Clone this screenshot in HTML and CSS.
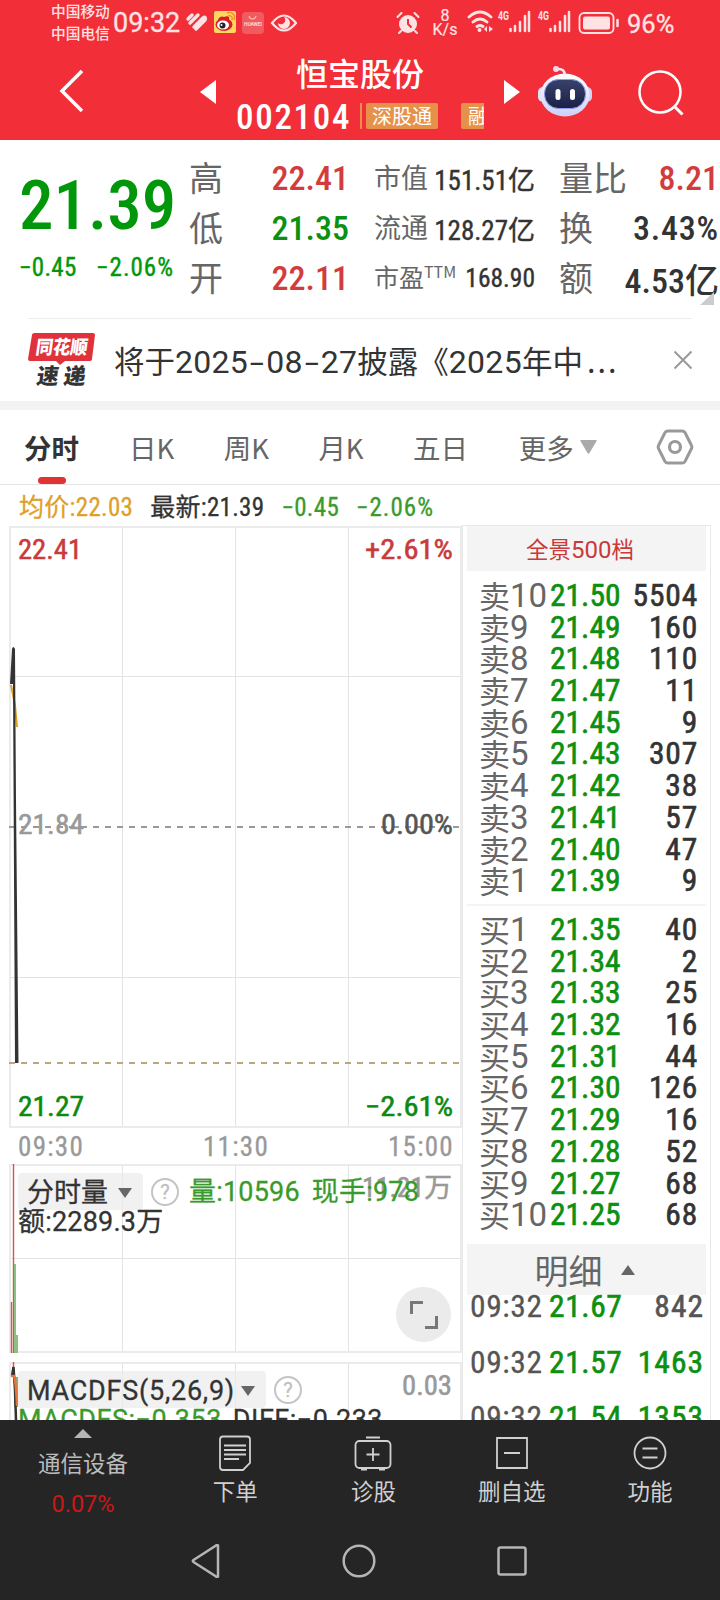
FILE: index.html
```html
<!DOCTYPE html>
<html lang="zh-CN">
<head>
    <meta charset="UTF-8">
    <meta name="viewport" content="width=device-width, initial-scale=1.0">
    <title>恒宝股份 002104</title>
    <link rel="stylesheet" href="styles.css">
</head>

<body>
    <header class="header">
        <div class="status">
            <div class="carriers"><span>中国移动</span><span>中国电信</span></div>
            <span class="clock">09:32</span>
            <svg class="status-icons" width="112" height="30" viewBox="0 0 112 30">
                <g fill="none" stroke="#ffe3e4" stroke-width="3.4" stroke-linecap="round">
                    <path d="M3 11l4-4M5 15l8-8M9 19l9-9c2-2 3 0 2 2l-9 9"/>
                </g>
                <rect x="29" y="3" width="22" height="22" rx="2" fill="#ffd75e"/>
                <ellipse cx="39" cy="16.500" rx="8.500" ry="6.500" fill="#d5202c"/>
                <path d="M33 12c1-4 5-4 6-3 4-2 6 0 5 3z" fill="#d5202c"/>
                <ellipse cx="38" cy="17" rx="6" ry="4.500" fill="#fff"/>
                <circle cx="37.500" cy="17.500" r="3" fill="#222"/>
                <circle cx="36.500" cy="17" r="1" fill="#fff"/>
                <path d="M43 8c3-1 5 1 4 4M42 5c5-2 9 2 7 7" fill="none" stroke="#f0932b" stroke-width="1.500"/>
                <rect x="57" y="4" width="22" height="22" rx="4" fill="#f05b60"/>
                <path d="M64 8c1 4 6 4 7 0" fill="none" stroke="#ffb5b7" stroke-width="1.200"/>
                <text x="59" y="18" class="huawei" textLength="18">HUAWEI</text>
                <path d="M87 15q12-15 24 0q-12 15-24 0z" fill="none" stroke="#ffe3e4" stroke-width="2.200"/>
                <path d="M99 9a6 6 0 1 1-6 6a4 4 0 0 0 6-6z" fill="#ffe3e4"/>
            </svg>
            <svg class="alarm" width="24" height="24" viewBox="0 0 24 24">
                <circle cx="12" cy="13" r="9" fill="#ffe3e4"/>
                <path d="M12 8v5l3.500 3.500" fill="none" stroke="#f22f39" stroke-width="2"/>
                <path d="M1.500 6l4-4M22.500 6l-4-4M5 20l-2 2M19 20l2 2" stroke="#ffe3e4" stroke-width="2" stroke-linecap="round"/>
            </svg>
            <div class="speed"><span>8</span><span>K/s</span></div>
            <svg class="signals" width="156" height="26" viewBox="0 0 156 26">
                <g fill="none" stroke="#ffe3e4" stroke-width="2.800" stroke-linecap="round">
                    <path d="M2 8q11-10 22 0M6 13q7-6 14 0M10 17.500q3-2 6 0"/>
                </g>
                <circle cx="12.500" cy="21" r="2" fill="#ffe3e4"/>
                <path d="M17 20l3-3v6zM26 20l-4-3v6z" fill="#ffe3e4"/>
                <text x="31" y="11" class="net" textLength="11" lengthAdjust="spacingAndGlyphs">4G</text>
                <path d="M43.500 22v-2M48 22v-5M53 22v-9M58 22V7M62 22V3" stroke="#ffe3e4" stroke-width="2.500" stroke-linecap="round"/>
                <text x="71" y="11" class="net" textLength="11" lengthAdjust="spacingAndGlyphs">4G</text>
                <path d="M83.500 22v-2M88 22v-5M93 22v-9M98 22V7M102 22V3" stroke="#ffe3e4" stroke-width="2.500" stroke-linecap="round"/>
                <rect x="112.500" y="4" width="34" height="20" rx="4.500" fill="none" stroke="#ffe3e4" stroke-width="1.800"/>
                <rect x="116" y="7.500" width="27" height="13" rx="2" fill="#ffe3e4"/>
                <path d="M150.500 11v6" stroke="#ffe3e4" stroke-width="2.500" stroke-linecap="round"/>
            </svg>
            <span class="battery">96%</span>
        </div>
        <div class="titlebar">
            <svg class="back" width="30" height="46" viewBox="0 0 30 46">
                <path d="M25 3L5 23L25 43" fill="none" stroke="#fff" stroke-width="3.500"/>
            </svg>
            <svg class="prev" width="16" height="24" viewBox="0 0 16 24"><path d="M16 0v24L0 12z" fill="#fff"/></svg>
            <div class="stock">
                <div class="stock-name">恒宝股份</div>
                <div class="stock-code">
                    <span class="num code">002104</span>
                    <i class="sliver"></i>
                    <span class="tag">深股通</span>
                    <span class="tag tag-cut">融</span>
                </div>
            </div>
            <svg class="next" width="16" height="24" viewBox="0 0 16 24"><path d="M0 0v24L16 12z" fill="#fff"/></svg>
            <svg class="robot" width="56" height="52" viewBox="0 0 56 52">
                <defs>
                    <linearGradient id="shell" x1="0" y1="0" x2="0" y2="1">
                        <stop offset="0" stop-color="#fff"/>
                        <stop offset="1" stop-color="#cdd0f8"/>
                    </linearGradient>
                    <linearGradient id="screen" x1="0" y1="0" x2="0" y2="1">
                        <stop offset="0" stop-color="#39426b"/>
                        <stop offset="1" stop-color="#1a2047"/>
                    </linearGradient>
                </defs>
                <path d="M20 4q8-1 8 7" fill="none" stroke="#f6e9fb" stroke-width="2.500"/>
                <circle cx="19" cy="4" r="3" fill="#f6d9ee"/>
                <rect x="1" y="22" width="10" height="15" rx="5" fill="#dfe0fb"/>
                <rect x="45" y="22" width="10" height="15" rx="5" fill="#cfd3fa"/>
                <ellipse cx="28" cy="30" rx="24.500" ry="21.500" fill="url(#shell)"/>
                <rect x="7.500" y="14.500" width="41" height="29" rx="14" fill="url(#screen)" stroke="#8f9df0" stroke-width="1"/>
                <path d="M21 26.500v6M35.500 26.500v6" stroke="#fff" stroke-width="5" stroke-linecap="round"/>
            </svg>
            <svg class="search" width="46" height="46" viewBox="0 0 46 46">
                <circle cx="22" cy="22" r="20.500" fill="none" stroke="#fff" stroke-width="2.500"/>
                <path d="M36 36l8.500 8.500" stroke="#fff" stroke-width="3"/>
            </svg>
        </div>
    </header>

    <section class="quote">
        <div class="price-box">
            <div class="num price">21.39</div>
            <div class="num change"><span>−0.45</span><span class="percent">−2.06%</span></div>
        </div>
        <div class="facts big">
            <div><label>高</label><b class="num red">22.41</b></div>
            <div><label>低</label><b class="num green">21.35</b></div>
            <div><label>开</label><b class="num red">22.11</b></div>
        </div>
        <div class="facts small">
            <div><label>市值</label><b class="num">151.51亿</b></div>
            <div><label>流通</label><b class="num">128.27亿</b></div>
            <div><label class="pe">市盈<sup>TTM</sup></label><b class="num pe-value">168.90</b></div>
        </div>
        <div class="facts big last">
            <div><label>量比</label><b class="num red">8.21</b></div>
            <div><label>换</label><b class="num turnover">3.43%</b></div>
            <div><label>额</label><b class="num">4.53亿</b></div>
        </div>
        <i class="corner"></i>
    </section>

    <section class="news">
        <svg class="news-logo" width="68" height="56" viewBox="0 0 68 56">
            <path d="M7 1H65q2 0 2 2l-3 24q0 2-2 2H37l-5 4l-4-4H2q-2 0-2-2L4 3q0-2 3-2z" fill="#e0323a"/>
            <g transform="skewX(-8)">
                <text x="10" y="22" class="logo-top" textLength="52" lengthAdjust="spacingAndGlyphs">同花顺</text>
                <text x="15" y="52" class="logo-bottom" textLength="49">速递</text>
            </g>
        </svg>
        <div class="news-text">将于<span>2025<i>-</i>08<i>-</i>27</span>披露《<span>2025</span>年中<em>...</em></div>
        <svg class="close" width="20" height="20" viewBox="0 0 20 20"><path d="M1.500 1.500l17 17M18.500 1.500l-17 17" stroke="#999" stroke-width="2"/></svg>
    </section>

    <nav class="tabs">
        <a class="tab active">分时</a>
        <a class="tab">日K</a>
        <a class="tab">周K</a>
        <a class="tab">月K</a>
        <a class="tab">五日</a>
        <a class="tab more">更多<svg width="17" height="14" viewBox="0 0 17 14"><path d="M1 0h15q1 0 .6 1L9.500 13q-1 1.500-2 0L.4 1Q0 0 1 0z" fill="#aaa"/></svg></a>
        <svg class="gear" width="38" height="36" viewBox="0 0 38 36">
            <path d="M12 2h14q2 0 3 1.500l6.500 13q.8 1.500 0 3L29 32.500q-1 1.500-3 1.500H12q-2 0-3-1.500l-6.500-13q-.8-1.500 0-3L9 3.500Q10 2 12 2z" fill="none" stroke="#999" stroke-width="3"/>
            <circle cx="19" cy="18" r="5.500" fill="none" stroke="#999" stroke-width="3.200"/>
        </svg>
    </nav>

    <div class="legend num">
        <span class="avg">均价:22.03</span>
        <span>最新:21.39</span>
        <span class="dgreen">−0.45</span>
        <span class="dgreen percent">−2.06%</span>
    </div>

    <main class="main">
        <div class="charts">
            <svg class="panel" width="462" height="603" viewBox="0 525 462 603">
                <g fill="none" stroke="#e3e3e3">
                    <path d="M122.500 527V1127M235.500 527V1127M348.500 527V1127M10 676.500H461M10 977.500H461"/>
                    <path d="M10 527H461V1127H10z" stroke="#ebebeb" stroke-width="2"/>
                </g>
                <path d="M9 827H462" stroke="#999" stroke-width="2" stroke-dasharray="6 6" />
                <path d="M9 1063H462" stroke="#bda67c" stroke-width="2" stroke-dasharray="6 6"/>
                <path d="M11 685L15 705L17 727" fill="none" stroke="#e0a020" stroke-width="2"/>
                <path d="M10 684L12 649q1-4 3 0L16 800L18.500 1063H15L13 684z" fill="#333"/>
                <g class="axis">
                    <text x="18" y="559" class="f-red" textLength="64" lengthAdjust="spacingAndGlyphs">22.41</text>
                    <text x="365" y="559" class="f-red" textLength="88" lengthAdjust="spacingAndGlyphs">+2.61%</text>
                    <text x="18" y="834" class="f-gray" textLength="66" lengthAdjust="spacingAndGlyphs">21.84</text>
                    <text x="381" y="834" class="f-dark" textLength="72" lengthAdjust="spacingAndGlyphs">0.00%</text>
                    <text x="18" y="1116" class="f-green" textLength="66" lengthAdjust="spacingAndGlyphs">21.27</text>
                    <text x="365" y="1116" class="f-green" textLength="88" lengthAdjust="spacingAndGlyphs">−2.61%</text>
                </g>
            </svg>
            <div class="times num"><span>09:30</span><span>11:30</span><span>15:00</span></div>
            <div class="sub volume">
                <svg class="panel" width="462" height="189" viewBox="0 1164 462 189">
                    <g fill="none" stroke="#e3e3e3">
                        <path d="M122.500 1165V1352M235.500 1165V1352M348.500 1165V1352M10 1258.500H461"/>
                        <path d="M10 1165H461V1352H10z" stroke="#ebebeb" stroke-width="2"/>
                    </g>
                    <path d="M11.500 1302V1353M13.500 1164V1353" stroke="#d9534f" stroke-width="1.400"/>
                    <path d="M14 1264h2v71h2v18h-4z" fill="#8cc081"/>
                    <text x="362" y="1197" class="vmax" textLength="90" lengthAdjust="spacingAndGlyphs">11.21万</text>
                </svg>
                <div class="sub-info">
                    <span class="picker">分时量<i></i></span><span class="help">?</span><span class="dgreen">量:10596</span><span class="dgreen now">现手:978</span>
                    <div class="amount">额:2289.3万</div>
                </div>
                <span class="expand"><svg width="30" height="30" viewBox="0 0 30 30"><path d="M2.500 14V2.500H14M27.500 16V27.500H16" fill="none" stroke="#777" stroke-width="3"/></svg></span>
            </div>
            <div class="sub macd">
                <svg class="panel" width="462" height="58" viewBox="0 1362 462 58">
                    <g fill="none" stroke="#e3e3e3">
                        <path d="M122.500 1363V1420M235.500 1363V1420M348.500 1363V1420"/>
                        <path d="M10 1420V1363H461V1420" stroke="#ebebeb" stroke-width="2"/>
                    </g>
                    <path d="M13.500 1362V1376" stroke="#d9534f" stroke-width="1.500"/>
                    <path d="M14 1377h4v30h-4z" fill="#7db56f"/>
                    <path d="M12 1376L13.500 1367L15 1390L16 1420" fill="none" stroke="#333" stroke-width="2.500"/>
                    <path d="M11 1376h3q2 6 3 30" fill="none" stroke="#e5743a" stroke-width="2.500"/>
                    <text x="402" y="1395" class="vmax" textLength="50" lengthAdjust="spacingAndGlyphs">0.03</text>
                </svg>
                <div class="sub-info">
                    <span class="picker wide"><span class="macd-name">MACDFS(5,26,9)</span><i></i></span><span class="help">?</span>
                    <div class="amount macd-values"><span class="dgreen">MACDFS:−0.353</span><span>DIFF:−0.233</span></div>
                </div>
            </div>
        </div>

        <aside class="depth">
            <div class="depth-head">全景<span>500</span>档</div>
            <div class="levels" id="sell"></div>
            <div class="levels buy" id="buy"></div>
            <div class="detail-head">明细<i></i></div>
            <div class="trades num">
                <div><span>09:32</span><b class="green">21.67</b><b class="gray">842</b></div>
                <div><span>09:32</span><b class="green">21.57</b><b class="green">1463</b></div>
                <div><span>09:32</span><b class="green">21.54</b><b class="green">1353</b></div>
            </div>
        </aside>
    </main>

    <footer class="bottom">
        <div class="actions">
            <div class="sector"><i></i><span>通信设备</span><b>0.07%</b></div>
            <div class="action">
                <svg width="34" height="36" viewBox="0 0 34 36" fill="none" stroke="#d0d0d0" stroke-width="1.800"><path d="M5 1.500H29q3 0 3 3V28l-7 7H5q-3 0-3-3V4.500q0-3 3-3zM6 10.500H28M6 15H28M6 19.500H28M6 24H21"/></svg>
                <span>下单</span>
            </div>
            <div class="action">
                <svg width="38" height="36" viewBox="0 0 38 36" fill="none" stroke="#d0d0d0" stroke-width="1.800"><rect x="1.500" y="6" width="35" height="27" rx="4"/><path d="M12 2.500H26M19 13V26M12.500 19.500H25.500M7 34.500H13M25 34.500H31"/></svg>
                <span>诊股</span>
            </div>
            <div class="action">
                <svg width="34" height="36" viewBox="0 0 34 36" fill="none" stroke="#d0d0d0" stroke-width="1.800"><path d="M2 3H32V33H2zM9 18H25"/></svg>
                <span>删自选</span>
            </div>
            <div class="action">
                <svg width="34" height="36" viewBox="0 0 34 36" fill="none" stroke="#d0d0d0" stroke-width="1.800"><circle cx="17" cy="18" r="15.500"/><path d="M9.500 13.500H24.500M9.500 22.500H24.500"/></svg>
                <span>功能</span>
            </div>
        </div>
        <div class="sysnav">
            <svg width="30" height="34" viewBox="0 0 30 34"><path d="M27 1.500v31q-1 1-2 0L2.500 18q-1.500-1 0-2L25 1.500q1-1 2 0z" fill="none" stroke="#b5b5b5" stroke-width="2.500"/></svg>
            <svg width="34" height="34" viewBox="0 0 34 34"><circle cx="17" cy="17" r="15.300" fill="none" stroke="#b5b5b5" stroke-width="2.500"/></svg>
            <svg width="30" height="30" viewBox="0 0 30 30"><rect x="1.500" y="1.500" width="27" height="27" rx="2" fill="none" stroke="#b5b5b5" stroke-width="2.500"/></svg>
        </div>
    </footer>

    <script>
        const sells = [[10, "21.50", 5504], [9, "21.49", 160], [8, "21.48", 110], [7, "21.47", 11], [6, "21.45", 9],
                       [5, "21.43", 307], [4, "21.42", 38], [3, "21.41", 57], [2, "21.40", 47], [1, "21.39", 9]];
        const buys = [[1, "21.35", 40], [2, "21.34", 2], [3, "21.33", 25], [4, "21.32", 16], [5, "21.31", 44],
                      [6, "21.30", 126], [7, "21.29", 16], [8, "21.28", 52], [9, "21.27", 68], [10, "21.25", 68]];

        function renderLevels(id, side, rows) {
            document.getElementById(id).innerHTML = rows.map(([level, price, count]) =>
                `<div class="level"><span class="side">${side}<span>${level}</span></span>` +
                `<b class="num green">${price}</b><b class="num count">${count}</b></div>`
            ).join("");
        }

        renderLevels("sell", "卖", sells);
        renderLevels("buy", "买", buys);
    </script>
</body>
</html>
```
FILE: styles.css
```css
* {
    box-sizing: border-box;
}

body {
    margin: 0;
    width: 720px;
    height: 1600px;
    overflow: hidden;
    background: #fff;
    color: #333;
    font-family: "Noto Sans CJK SC", sans-serif;
}

svg {
    display: block;
    flex: none;
}

b, i, em {
    font-style: normal;
    font-weight: 400;
}

.num {
    font-family: Roboto, "Noto Sans CJK SC", sans-serif;
    font-stretch: 87%;
}

.red { color: #d23c3c; }
.green { color: #0c9010; }
.dgreen { color: #3a9a2c; }
.gray { color: #555; }

/* header */
.header {
    height: 140px;
    background: #f22f39;
    color: #fff;
}

.status {
    display: flex;
    height: 48px;
    padding-left: 51px;
    color: #ffe3e4;
    font-family: Roboto, "Noto Sans CJK SC", sans-serif;
}

.carriers {
    display: flex;
    flex-direction: column;
    width: 62px;
    padding-top: 1px;
    font-size: 14.7px;
    font-weight: 500;
    line-height: 22px;
    white-space: nowrap;
}

.clock {
    width: 72px;
    font-size: 27px;
    line-height: 47px;
    -webkit-text-stroke: 0.3px;
}

.status-icons {
    margin-top: 8px;
}

.huawei {
    font-size: 5px;
    fill: #ffd5d6;
    font-weight: bold;
}

.alarm {
    margin: 11px 0 0 99px;
}

.speed {
    display: flex;
    flex-direction: column;
    align-items: center;
    width: 32px;
    margin-left: 9px;
    padding-top: 9px;
    font-size: 16px;
    line-height: 14px;
    -webkit-text-stroke: 0.2px;
}

.signals {
    margin: 9px 0 0 6px;
}

.net {
    font-size: 13px;
    fill: #ffe3e4;
    font-weight: bold;
}

.battery {
    margin-left: 4px;
    font-size: 25.5px;
    line-height: 49px;
    -webkit-text-stroke: 0.3px;
}

.titlebar {
    display: flex;
    height: 92px;
}

.back { margin: 20px 0 0 57px; }
.prev { margin: 32px 0 0 113px; }
.next { margin: 32px 0 0 20px; }
.robot { margin: 17px 0 0 17px; }
.search { margin: 22px 0 0 45px; }

.stock {
    width: 248px;
    margin-left: 20px;
}

.stock-name {
    height: 50px;
    padding-left: 60px;
    font-size: 32px;
    font-weight: 500;
    line-height: 48px;
    white-space: nowrap;
}

.stock-code {
    display: flex;
    align-items: center;
    height: 36px;
    overflow: hidden;
}

.code {
    flex: none;
    width: 124px;
    padding-top: 3px;
    font-size: 35px;
    font-weight: 500;
    letter-spacing: 1.7px;
    line-height: 36px;
}

.sliver {
    flex: none;
    width: 2px;
    height: 26px;
    background: #e6914a;
}

.tag {
    flex: none;
    width: 72px;
    height: 26px;
    margin-left: 4px;
    border-radius: 2px;
    background: #e6914a;
    font-size: 20px;
    line-height: 25px;
    text-align: center;
}

.tag-cut {
    width: 40px;
    margin-left: 23px;
    padding-left: 7px;
    text-align: left;
}

/* quote */
.quote {
    position: relative;
    display: flex;
    height: 179px;
    padding-top: 13px;
}

.quote::after {
    content: "";
    position: absolute;
    left: 28px;
    right: 28px;
    bottom: 0;
    height: 1px;
    background: #ececec;
}

.price-box {
    width: 189px;
    padding-left: 19px;
    color: #00980a;
}

.price {
    height: 90px;
    font-size: 69px;
    font-weight: 500;
    line-height: 105px;
}

.change {
    display: flex;
    justify-content: space-between;
    width: 155px;
    font-size: 25px;
    letter-spacing: 0.3px;
    line-height: 50px;
    white-space: nowrap;
    -webkit-text-stroke: 0.4px;
}

.percent {
    letter-spacing: 1px;
}

.facts > div {
    display: flex;
    align-items: center;
    justify-content: space-between;
    height: 50px;
    white-space: nowrap;
}

.facts label {
    margin-top: -4px;
    color: #666;
}

.facts b {
    font-weight: 500;
}

.big {
    width: 160px;
    font-size: 34px;
}

.small {
    width: 161px;
    margin-left: 25px;
    font-size: 27px;
}

.small b {
    font-weight: 400;
    -webkit-text-stroke: 0.4px;
}

.small .pe-value {
    font-size: 25.5px;
}

.pe {
    font-size: 25px;
}

.pe sup {
    font-size: 16px;
    line-height: 0;
}

.last {
    margin-left: 24px;
}

.turnover {
    letter-spacing: 0.8px;
}

.corner {
    position: absolute;
    right: 6px;
    bottom: 14px;
    border-left: 14px solid transparent;
    border-bottom: 13px solid #ccc;
}

/* news */
.news {
    display: flex;
    align-items: center;
    height: 91px;
    padding-left: 28px;
    border-bottom: 9px solid #f3f3f3;
}

.news-logo {
    overflow: visible;
}

.logo-top {
    font-size: 19px;
    font-weight: 900;
    fill: #fff;
}

.logo-bottom {
    font-size: 22px;
    font-weight: 900;
    fill: #333;
}

.news-text {
    width: 559px;
    padding: 2px 0 0 18px;
    font-size: 30.5px;
    line-height: 50px;
    white-space: nowrap;
}

.news-text span {
    font-family: Roboto, sans-serif;
    font-size: 32px;
    letter-spacing: 0.3px;
}

.news-text i {
    display: inline-block;
    width: 18px;
    text-align: center;
    transform: scaleX(1.6);
}

.news-text em {
    margin-left: 4px;
    letter-spacing: 2px;
}

.close {
    margin-left: 18px;
}

/* tabs */
.tabs {
    display: flex;
    height: 75px;
    padding-left: 24px;
    border-bottom: 1px solid #e5e5e5;
    color: #666;
    font-size: 27.5px;
    line-height: 74px;
}

.tab {
    width: 94.7px;
    padding-left: 9px;
    white-space: nowrap;
}

.tab.active {
    position: relative;
    width: 96px;
    padding-left: 0;
    color: #333;
    font-weight: bold;
}

.tab.active::after {
    content: "";
    position: absolute;
    left: 14px;
    bottom: 0;
    width: 28px;
    height: 7px;
    border-radius: 4px;
    background: #e03434;
}

.more {
    display: flex;
    align-items: center;
    gap: 6px;
    width: 135px;
    padding-left: 20px;
}

.gear {
    margin: 19px 0 0 22px;
}

/* legend */
.legend {
    display: flex;
    gap: 17px;
    height: 40px;
    padding-left: 19px;
    font-size: 25px;
    letter-spacing: 0.3px;
    line-height: 46px;
    white-space: nowrap;
    -webkit-text-stroke: 0.3px;
}

.avg { color: #dfa02a; }

/* charts */
.main {
    display: flex;
    height: 895px;
    overflow: hidden;
}

.charts {
    width: 462px;
}

.axis, .vmax {
    font-family: Roboto, "Noto Sans CJK SC", sans-serif;
    font-size: 27px;
    font-stretch: 87%;
    stroke-width: 0.5px;
}

.f-red { fill: #c93a3a; stroke: #c93a3a; }
.f-gray { fill: #999; stroke: #999; }
.f-dark { fill: #555; stroke: #555; }
.f-green { fill: #0c8a10; stroke: #0c8a10; }
.vmax { fill: #999; stroke: #999; }

.times {
    display: flex;
    justify-content: space-between;
    height: 36px;
    padding: 0 8px 0 18px;
    color: #999;
    font-size: 27px;
    letter-spacing: 1.3px;
    line-height: 39px;
    -webkit-text-stroke: 0.3px;
}

.sub {
    position: relative;
}

.volume {
    height: 198px;
}

.sub-info {
    position: absolute;
    left: 18px;
    top: 9px;
    display: flex;
    flex-wrap: wrap;
    align-items: center;
    width: 440px;
    font-family: Roboto, "Noto Sans CJK SC", sans-serif;
    font-size: 27px;
    letter-spacing: 0.2px;
    line-height: 36px;
    white-space: nowrap;
    -webkit-text-stroke: 0.3px;
}

.picker {
    display: flex;
    align-items: center;
    justify-content: space-between;
    width: 125px;
    height: 37px;
    padding: 3px 11px 0 9px;
    border-radius: 4px;
    background: rgba(235, 235, 235, 0.7);
    letter-spacing: 0;
}

.picker i {
    border: 7px solid transparent;
    border-top: 10px solid #666;
    border-bottom: 0;
}

.wide {
    width: 248px;
}

.macd-name {
    letter-spacing: 0.75px;
}

.help {
    width: 28px;
    height: 28px;
    margin: 0 10px 0 8px;
    border: 2px solid #c4c4c4;
    border-radius: 50%;
    color: #c0c0c0;
    font-size: 20px;
    line-height: 25px;
    text-align: center;
}

.now {
    margin-left: 12px;
}

.amount {
    width: 100%;
    height: 24px;
    line-height: 24px;
}

.macd-values {
    display: flex;
    gap: 11px;
    letter-spacing: 0.5px;
}

.expand {
    position: absolute;
    left: 396px;
    top: 123px;
    display: flex;
    align-items: center;
    justify-content: center;
    width: 55px;
    height: 55px;
    border-radius: 50%;
    background: #ebebeb;
}

/* depth */
.depth {
    width: 249px;
    padding: 0 4px;
    border: 1px solid #e8e8e8;
    border-bottom: 0;
}

.depth-head {
    height: 45px;
    padding-right: 13px;
    background: #f4f4f4;
    color: #c93a3a;
    font-size: 22.5px;
    line-height: 45px;
    text-align: center;
}

.depth-head span {
    font-family: Roboto, sans-serif;
    font-size: 24px;
}

.levels {
    height: 335px;
    padding-top: 8px;
    border-bottom: 2px solid #f4f4f4;
}

.buy {
    height: 338px;
    padding-top: 7px;
    border: 0;
}

.level {
    display: grid;
    grid-template-columns: 71px 70px 78px;
    align-items: center;
    height: 31.7px;
    padding-left: 12px;
    font-size: 31.5px;
    line-height: 32px;
    white-space: nowrap;
}

.level b, .trades b {
    -webkit-text-stroke: 0.6px;
}

.side {
    display: flex;
    color: #666;
    font-size: 31px;
}

.side span {
    font-family: Roboto, sans-serif;
    font-size: 33px;
    line-height: 34px;
}

.level .count {
    letter-spacing: 0.8px;
    text-align: right;
}

.detail-head {
    display: flex;
    align-items: center;
    justify-content: center;
    gap: 18px;
    height: 51px;
    padding-right: 4px;
    background: #f4f4f4;
    color: #666;
    font-size: 34px;
}

.detail-head i {
    border: 7px solid transparent;
    border-top: 0;
    border-bottom: 10px solid #666;
}

.trades {
    margin-top: -16px;
}

.trades > div {
    display: grid;
    grid-template-columns: 79px 77px 78px;
    height: 55.5px;
    padding-left: 3px;
    color: #555;
    font-size: 31.5px;
    letter-spacing: 0.6px;
    line-height: 55px;
    white-space: nowrap;
    -webkit-text-stroke: 0.3px;
}

.trades b:last-child {
    letter-spacing: 1px;
    text-align: right;
}

/* bottom */
.bottom {
    height: 180px;
    background: #252525;
    color: #d0d0d0;
}

.actions {
    display: flex;
    height: 102px;
    font-size: 22.5px;
}

.sector {
    display: flex;
    flex-direction: column;
    align-items: center;
    width: 166px;
    padding-top: 9px;
    line-height: 48px;
    color: #bbb;
}

.sector i {
    border: 9px solid transparent;
    border-top: 0;
    border-bottom-color: #b5b5b5;
}

.sector span {
    height: 42px;
    line-height: 48px;
}

.sector b {
    color: #cc1717;
    font-family: Roboto, sans-serif;
    font-size: 23.5px;
}

.action {
    display: flex;
    flex-direction: column;
    align-items: center;
    width: 138.3px;
    padding-top: 15px;
    line-height: 38px;
}

.sysnav {
    display: flex;
    align-items: center;
    gap: 121px;
    height: 78px;
    padding: 0 0 0 191px;
}
```
